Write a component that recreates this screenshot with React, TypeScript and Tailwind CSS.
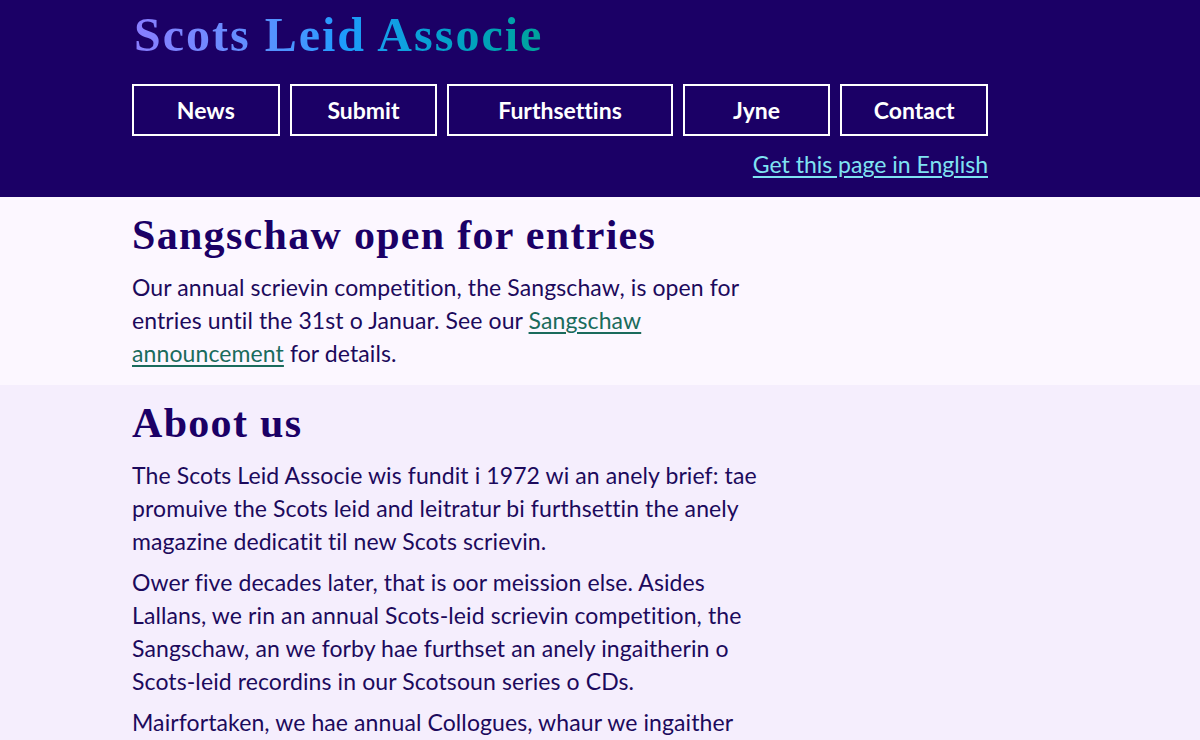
import React from "react";

export default function App() {
  const nav = [
    { label: "News", w: "w-[148px]" },
    { label: "Submit", w: "w-[148px]" },
    { label: "Furthsettins", w: "w-[226px]" },
    { label: "Jyne", w: "w-[148px]" },
    { label: "Contact", w: "w-[148px]" },
  ];
  return (
    <div className="min-h-[740px] bg-[#f5eefd] font-['Lato',sans-serif] text-[#1c0a5c] [font-variant-ligatures:none]">
      <header className="bg-[#1b0066]">
        <div className="ml-[132px] w-[856px] pb-[15px]">
          <h1 className="pt-[4px] font-['Liberation_Serif',serif] text-[48px] font-bold leading-[62px] tracking-[2px]">
            <span className="bg-gradient-to-r from-[#8a7dff] via-[#1f9bff] to-[#00a39a] bg-clip-text text-transparent pl-[2px]">
              Scots Leid Associe
            </span>
          </h1>
          <nav className="mt-[18px] flex gap-[10px]">
            {nav.map((n) => (
              <a
                key={n.label}
                className={`${n.w} flex h-[52px] items-center justify-center border-2 border-white text-[23px] font-bold text-white`}
              >
                {n.label}
              </a>
            ))}
          </nav>
          <div className="mt-[10px] flex justify-end">
            <a className="text-[23px] leading-[36px] text-[#7fe3f2] underline underline-offset-[3px]">
              Get this page in English
            </a>
          </div>
        </div>
      </header>
      <section className="bg-[#fcf7ff]">
        <div className="ml-[132px] w-[856px] pt-[10px] pb-[15px]">
          <h2 className="font-['Liberation_Serif',serif] text-[42px] font-bold leading-[56px] tracking-[1.3px] text-[#1b0066]">
            Sangschaw open for entries
          </h2>
          <p className="mt-[8px] max-w-[640px] text-[23px] leading-[33px] tracking-[0.1px]">
            Our annual scrievin competition, the Sangschaw, is open for entries until the 31st o Januar. See our{" "}
            <a className="text-[#1a6b5c] underline underline-offset-[3px]">Sangschaw announcement</a> for details.
          </p>
        </div>
      </section>
      <section>
        <div className="ml-[132px] w-[856px] pt-[13px] pb-[20px]">
          <h2 className="font-['Liberation_Serif',serif] text-[42px] font-bold leading-[50px] tracking-[1.3px] text-[#1b0066]">
            Aboot us
          </h2>
          <div className="mt-[11px] flex max-w-[640px] flex-col gap-[8px] text-[23px] leading-[33px] tracking-[0.1px]">
            <p>
              The Scots Leid Associe wis fundit i 1972 wi an anely brief: tae promuive the Scots leid and leitratur bi
              furthsettin the anely magazine dedicatit til new Scots scrievin.
            </p>
            <p>
              Ower five decades later, that is oor meission else. Asides Lallans, we rin an annual Scots-leid scrievin
              competition, the Sangschaw, an we forby hae furthset an anely ingaitherin o Scots-leid recordins in our
              Scotsoun series o CDs.
            </p>
            <p>
              Mairfortaken, we hae annual Collogues, whaur we ingaither Scots speakers an scrievers frae aw ower the
              kintra.
            </p>
          </div>
        </div>
      </section>
    </div>
  );
}
